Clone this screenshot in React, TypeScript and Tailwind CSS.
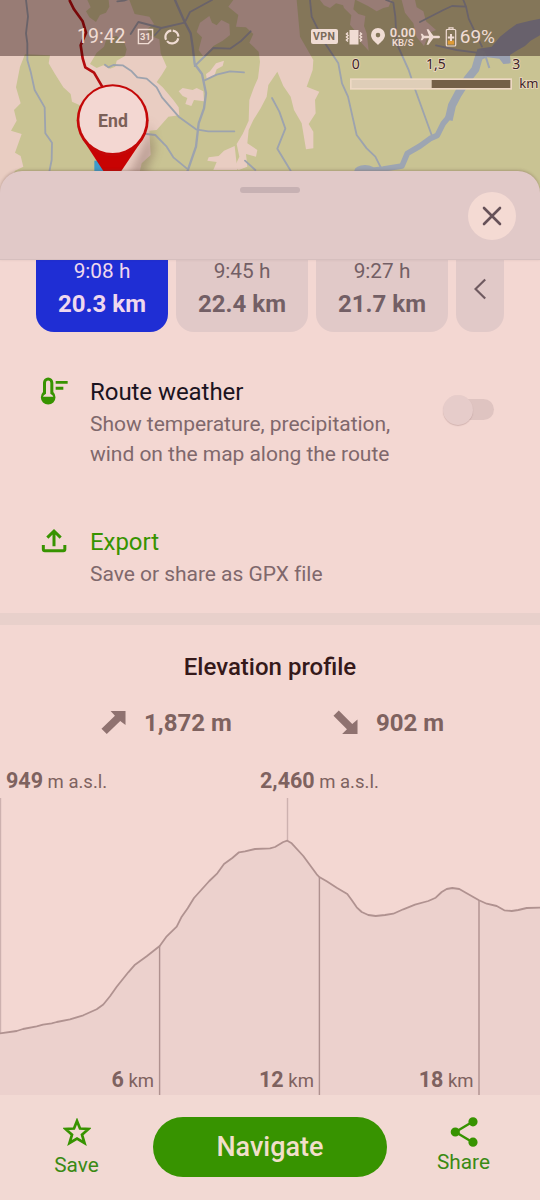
import type { ReactNode } from 'react';

// routes
const routes = [
  { time: '9:08 h', distance: '20.3 km', active: true },
  { time: '9:45 h', distance: '22.4 km', active: false },
  { time: '9:27 h', distance: '21.7 km', active: false },
];

// elevation line, x is in px and y is measured from the top of the chart
const profile: [number, number][] = [
  [0, 235.3], [16.7, 233], [23, 231], [36.7, 228.3], [43, 226.7], [51.7, 225.3], [56.7, 224], [70, 221.3],
  [83.3, 217.3], [96.7, 211.3], [103.3, 206.5], [110, 198.3], [116.7, 188.7], [128.3, 174.3], [135, 166.7],
  [146.7, 158.3], [159.7, 148], [166.7, 138.3], [176.7, 128.7], [181.7, 118.7], [187.7, 110.3], [194, 100],
  [209.3, 83], [217.3, 75.3], [224, 66], [232.3, 60], [239, 54.3], [245, 53.3], [255, 51], [270, 50.3],
  [275, 49], [283.3, 44], [287.3, 42.7], [291.7, 45.3], [303.3, 58], [316.7, 76.3], [319.3, 79], [326.7, 83.3],
  [336.7, 89.7], [347.3, 96], [351.7, 102], [356.7, 109.3], [361.7, 114], [368.3, 117], [375.7, 118],
  [385, 117], [393.3, 115.7], [403.3, 111.3], [415, 106.7], [428.3, 103], [435.7, 99.7], [441.7, 94],
  [446.7, 91], [452.3, 90], [459.3, 91], [466.7, 95.3], [479, 102.3], [486.7, 105.7], [496.7, 108],
  [504.3, 112.3], [511.7, 113], [518.3, 112], [526.7, 110], [540, 109.7],
];

const distances = [
  { value: 6, x: 159.6, y: 148 },
  { value: 12, x: 319.4, y: 79 },
  { value: 18, x: 479, y: 102 },
];

const MapView = () => (
  <svg className="block h-[200px] w-[540px] shrink-0" viewBox="0 0 1620 600">
    <defs>
      <filter id="shade" x="-50%" y="-50%" width="200%" height="200%">
        <feGaussianBlur stdDeviation="14" />
      </filter>
    </defs>
    <rect width="1620" height="600" fill="#e9cdc2" />

    {/* forests */}
    <g fill="#c9c393">
      <path d="M75 163L150 166L146 190L165 222L190 262L212 282L216 305L245 318L300 420L310 540L30 540L45 512L70 500L62 468L45 458L65 402L33 392L50 362L42 330L62 310L48 262L60 200Z" />
      <path d="M262 0L326 0L328 20L318 38L300 45L288 66L268 52L258 34L272 22Z" />
      <path d="M270 192L290 158L312 140L320 115L350 108L372 125L380 148L375 168L350 182L346 200L330 206L310 196L290 204Z" />
      <path d="M388 0L404 42L448 50L462 72L440 88L452 108L478 118L482 160L500 200L485 225L470 246L488 262L520 300L536 322L538 346L505 350L470 390L448 392L450 430L452 465L425 490L400 600L1620 600L1620 0Z" />
    </g>

    {/* clearings */}
    <g fill="#e9cdc2">
      <path d="M628 48L600 68L590 96L606 112L596 150L612 172L640 138L668 122L690 105L688 72L664 60L650 76L636 68Z" />
      <path d="M700 0L685 20L715 45L708 80L738 82L760 102L748 128L776 155L780 185L774 235L762 262L748 300L746 362L728 402L710 432L718 470L704 500L716 510L742 500L738 462L768 470L772 450L742 430L746 390L760 360L782 325L800 290L805 255L832 215L850 258L872 290L882 330L905 370L918 448L940 445L940 395L926 372L947 340L945 300L958 275L920 260L938 210L940 180L900 110L890 0Z" />
      <path d="M672 182L648 190L630 214L618 222L620 236L642 230L650 208L668 198Z" />
      <path d="M548 264L536 274L548 288L562 294L556 312L574 318L582 300L612 304L610 274L590 264L578 270Z" />
      <path d="M704 438L672 452L656 468L626 472L622 482L650 486L640 510L712 510Z" />
      <path d="M960 0L1052 0L1038 18L1008 10L990 24L972 16Z" />
      <path d="M1025 0L1065 0L1060 28L1075 42L1096 48L1092 78L1100 100L1106 152L1084 128L1070 98L1050 74L1054 46L1032 24Z" />
      <path d="M1068 0L1175 0L1166 20L1150 24L1130 34L1104 18Z" />
      <path d="M1205 0L1245 0L1250 22L1270 34L1278 64L1308 90L1288 98L1272 138L1250 112L1240 70L1215 38Z" />
    </g>

    {/* streams */}
    <g fill="none" stroke="#9da3ae" strokeWidth="5.500" strokeLinejoin="round" strokeLinecap="round">
      <path d="M78 0L84 50L78 100L82 130L82 180L92 215L104 270L134 322L136 400L156 428L155 480L148 515" />
      <path d="M315 194L325 202L340 195L368 196L395 214L412 232L440 236L470 262L486 292L536 350L588 388L625 394L703 394" />
      <path d="M440 402L466 405L500 440L520 472L560 505" />
      <path d="M525 0L554 66L572 100L578 140L584 192L606 222L618 280L612 325L596 370L588 440L562 515" strokeWidth="7" />
      <path d="M554 68L570 36L636 0" />
      <path d="M392 102L415 66L484 84L554 68M484 84L465 105" />
      <path d="M584 198L640 144L690 146L722 124L752 94" />
      <path d="M612 242L650 224L690 214L732 217" />
      <path d="M352 4L372 2L398 -8" />
      <path d="M735 482L766 510" />
      <path d="M816 294L838 335L856 386L832 446L872 512" />
      <path d="M930 0L935 50L975 130L1015 190L1026 250L1044 290L1070 405L1100 445L1126 470L1144 506" />
      <path d="M1158 0L1180 8L1186 50L1190 130L1226 210L1246 270L1296 408" />
      <path d="M1430 158L1370 150L1308 136" />
      <path d="M1260 66L1330 30L1356 18L1398 20M1390 0L1398 20L1406 56L1446 140" />
    </g>

    {/* river */}
    <path d="M1620 56L1590 62L1550 72L1525 90L1500 110L1475 140L1435 146L1428 185L1462 172L1498 176L1510 192L1532 190L1530 165L1550 152L1575 138L1592 122L1620 106Z" fill="#9aa1b2" />
    <g fill="none" stroke="#9da5b2" strokeLinejoin="round">
      <path d="M1444 150L1434 180L1426 208L1402 238L1374 282L1356 316L1346 360" strokeWidth="24" />
      <path d="M1347 350L1330 370L1312 406L1290 416L1260 438L1222 460L1206 498L1150 507L1090 514" strokeWidth="17" />
      <path d="M1454 160L1468 204" strokeWidth="6" />
    </g>
    <ellipse cx="1095" cy="512" rx="32" ry="17" fill="#9da5b2" />

    {/* scale */}
    <rect x="1050" y="235" width="486" height="34" fill="#eed8c4" />
    <rect x="1055" y="240" width="240" height="24" fill="#dfceb8" />
    <rect x="1295" y="240" width="236" height="24" fill="#746047" />
    <g fill="#3d2328" stroke="#ecd8c2" strokeWidth="5" paintOrder="stroke" fontFamily="Noto Sans, sans-serif" fontSize="42">
      <text x="1067" y="206" textAnchor="middle">0</text>
      <text x="1308" y="206" textAnchor="middle">1,5</text>
      <text x="1549" y="206" textAnchor="middle">3</text>
      <text x="1558" y="264" fontSize="39">km</text>
    </g>

    {/* track and end marker */}
    <path d="M208 0L222 28L248 64L258 98L242 136L248 175L256 202L282 218L308 262" fill="none" stroke="#b40c0e" strokeWidth="8" strokeLinejoin="round" />
    <path d="M445 340C462 400 420 450 380 540L430 540L465 450Z" fill="#6b4b45" opacity="0.35" filter="url(#shade)" />
    <path d="M283 482h28v40h-28z" fill="#3f9ccb" />
    <path d="M248 418L312 516Q338 548 362 516L428 418Z" fill="#c80303" />
    <circle cx="338" cy="361" r="108" fill="#c40808" />
    <circle cx="338" cy="359" r="100" fill="#f3d7d2" />
    <text x="339" y="380" textAnchor="middle" fontFamily="Roboto, sans-serif" fontWeight="700" fontSize="53" fill="#7b6058">
      End
    </text>
  </svg>
);

const StatusBar = () => (
  <div className="absolute inset-x-0 top-0 flex h-14 items-center bg-[#1f0202]/40 pt-[17px] pr-[45px] pl-[77px] text-[#f0dcd3]">
    <span className="text-[19.5px] leading-none">19:42</span>
    <svg className="ml-[11px] size-[17px]" viewBox="0 0 18 18" fill="none" stroke="currentColor" strokeWidth="1.500">
      <path d="M1.500 1.500h15v10.500l-4.500 4.500h-10.500z" />
      <text x="8.800" y="12.400" textAnchor="middle" fontSize="10" fontWeight="700" fill="currentColor" stroke="none">
        31
      </text>
    </svg>
    <svg className="ml-[10px] size-4" viewBox="0 0 16 16" fill="none" stroke="currentColor" strokeWidth="2.200">
      <path d="M8.800 1.600A6.400 6.400 0 0 1 14.400 7.600M14.200 9.200A6.400 6.400 0 0 1 3 12.100M2.100 10.800A6.400 6.400 0 0 1 7.300 1.600" />
    </svg>
    <div className="ml-auto flex items-center">
      <span className="flex h-[15px] w-[27px] items-center justify-center rounded-[2px] bg-[#f0dcd3] text-[10.5px] font-bold tracking-[0.4px] text-[#796a59]">VPN</span>
      <svg className="ml-[7px] h-4 w-[18px]" viewBox="0 0 18 16" fill="none" stroke="currentColor" strokeWidth="1.500">
        <rect x="4.500" y="1" width="9" height="14.500" fill="currentColor" stroke="none" />
        <path d="M3 3.500L1.500 5L3 6.500L1.500 8L3 9.500L1.500 11L3 12.500M15 3.500L16.500 5L15 6.500L16.500 8L15 9.500L16.500 11L15 12.500" />
      </svg>
      <svg className="ml-2 h-[17px] w-[14px]" viewBox="0 0 14 17" fill="currentColor" fillRule="evenodd">
        <path d="M7 0a7 7 0 0 1 7 7c0 4-4 7-7 10C4 14 0 11 0 7a7 7 0 0 1 7-7zM7 4.800a2.300 2.300 0 1 0 0 4.600a2.300 2.300 0 1 0 0-4.600z" />
      </svg>
      <div className="ml-1 flex w-[28px] flex-col items-center font-semibold">
        <span className="text-[13px] leading-[11px]">0.00</span>
        <span className="text-[9.5px] leading-[9px]">KB/S</span>
      </div>
      <svg className="ml-[3px] h-4 w-5" viewBox="0 0 20 16" fill="currentColor">
        <path d="M20 8c0-.9-.8-1.300-1.700-1.300h-5L8.500.3H6.600l2.500 6.400H4L2.400 4.700H.7L1.900 8L.7 11.300h1.700L4 9.300h5.100l-2.500 6.400h1.900l4.800-6.400h5c.9 0 1.700-.4 1.700-1.300z" />
      </svg>
      <svg className="ml-[5px] h-5 w-3" viewBox="0 0 12 20" fill="none" stroke="currentColor" strokeWidth="1.200">
        <path d="M4 2V.8h4V2" />
        <rect x="1.300" y="2.500" width="9.400" height="16.500" rx="1" />
        <path d="M2.800 13.500h6.400v4H2.800z" fill="#dd9a36" stroke="none" />
        <path d="M6 7v7M2.800 10.500h6.400" strokeWidth="2" />
      </svg>
      <span className="ml-[3px] text-[19px] leading-none">69%</span>
    </div>
  </div>
);

type RowProps = { icon: ReactNode; title: string; titleClass: string; children: ReactNode; action?: ReactNode };

const OptionRow = ({ icon, title, titleClass, children, action }: RowProps) => (
  <div className="flex pr-[46px] pl-10">
    <div className="w-[50px] shrink-0">{icon}</div>
    <div className="flex-1">
      <h3 className={`text-[24px] leading-8 tracking-[-0.05px] ${titleClass}`}>{title}</h3>
      <p className="mt-px text-[21px] leading-[30px] tracking-[-0.03px] whitespace-nowrap text-[#7f686c]">{children}</p>
    </div>
    {action}
  </div>
);

const ElevationChart = () => {
  const line = profile.map(([x, y]) => `${x},${y}`).join(' ');

  return (
    <svg className="block h-[297px] w-[540px]" viewBox="0 0 540 297">
      <polygon points={`0,297 ${line} 540,297`} fill="#ecd1cd" />
      <path d="M0.500 0V235M287.500 0V43" stroke="#cdb1af" strokeWidth="1.400" />
      {distances.map((item) => (
        <g key={item.value} fill="#7e625f">
          <path d={`M${item.x} ${item.y}V297`} stroke="#af918f" strokeWidth="1.400" />
          <text x={item.x - 5.500} y="288.700" textAnchor="end" fontSize="18.500">
            <tspan fontWeight="700" fontSize="21.500">{item.value}</tspan> km
          </text>
        </g>
      ))}
      <polyline points={line} fill="none" stroke="#b09290" strokeWidth="1.800" strokeLinejoin="round" />
    </svg>
  );
};

export default function App() {
  return (
    <div className="relative flex h-[1200px] w-[540px] flex-col overflow-hidden bg-[#f3d7d2] font-[Roboto,sans-serif]">
      <MapView />
      <StatusBar />

      {/* sheet header, overlaps the lower edge of the map */}
      <header className="relative z-10 -mt-[29px] flex h-[89px] shrink-0 justify-center rounded-t-[22px] border-b border-[#d6bfbe] bg-[#e1c9c8] shadow-[0_-1px_3px_rgba(90,60,50,0.3)]">
        <div className="mt-4 h-1.5 w-[60px] rounded-full bg-[#c7b1b3]" />
        <button className="absolute top-[21px] right-6 flex size-12 items-center justify-center rounded-full bg-[#f4dad3]">
          <svg className="size-5" viewBox="0 0 20 20" stroke="#665158" strokeWidth="2.600" strokeLinecap="round">
            <path d="M2 2L18 18M18 2L2 18" />
          </svg>
        </button>
      </header>

      {/* route cards */}
      <div className="flex gap-2 px-9">
        {routes.map((route) => (
          <div
            key={route.time}
            className={`flex h-[71.5px] w-[132px] flex-col items-center rounded-b-[18px] ${route.active ? 'bg-[#1f2ed4] text-[#efd8ee]' : 'bg-[#e1c9c8] text-[#735f65]'}`}
          >
            <span className="text-[20.8px] leading-[23px]">{route.time}</span>
            <span className="mt-[5px] text-[24px] leading-8 font-bold">{route.distance}</span>
          </div>
        ))}
        <button className="flex h-[71.5px] flex-1 justify-center rounded-b-[18px] bg-[#e1c9c8] pt-[18px]">
          <svg className="h-[22px] w-3" viewBox="0 0 12 22" fill="none" stroke="#6f5a60" strokeWidth="2.200">
            <path d="M11.200 1.500L1.500 11L11.200 20.500" />
          </svg>
        </button>
      </div>

      {/* options */}
      <div className="mt-11 flex flex-col gap-[57px]">
        <OptionRow
          title="Route weather"
          titleClass="text-[#1b1320]"
          icon={
            <svg className="mt-px h-[29px] w-7" viewBox="60 51 84 87" fill="#379300">
              <path fillRule="evenodd" d="M69 68a15.500 15.500 0 0 1 31 0v28a22 22 0 1 1-31 0zM78 68v33q-8 4-9 9h31q-1-5-9-9v-33a6.500 6.500 0 0 0-13 0z" />
              <path d="M107 63h36v8h-36zM107 80h23v9h-23z" />
            </svg>
          }
          action={
            <div className="mt-[18px] flex h-8 w-[51px] items-center">
              <div className="z-10 size-[30px] rounded-full bg-[#e6ccca] shadow-[0_1px_1px_rgba(120,80,80,0.25)]" />
              <div className="-ml-4 h-[21px] w-[37px] rounded-full bg-[#dfc4c1]" />
            </div>
          }
        >
          Show temperature, precipitation,
          <br />
          wind on the map along the route
        </OptionRow>
        <OptionRow
          title="Export"
          titleClass="text-[#379300]"
          icon={
            <svg className="mt-[2px] h-[25px] w-7" viewBox="60 507 84 75" fill="none" stroke="#379300" strokeWidth="9">
              <path d="M70 558V571q0 4.500 4.500 4.500H130q4.500 0 4.500-4.500V558" />
              <path d="M102 562V517M82 536L102 516L122 536" />
            </svg>
          }
        >
          Save or share as GPX file
        </OptionRow>
      </div>

      <div className="mt-6 h-3 shrink-0 bg-[#e8d0cb]" />

      {/* elevation */}
      <section className="relative flex flex-col text-[#7e625f]">
        <h2 className="mt-[26px] text-center text-[24px] leading-8 font-medium text-[#35191a]">Elevation profile</h2>
        <div className="mt-6 flex h-8 items-center pl-[101px] text-[24px] font-bold">
          <svg className="size-[25px]" viewBox="0 0 26 26" fill="#8f7270">
            <path d="M10 1H25.500V15.500L20 11.500L6 25L0.500 19.500L14.500 6Z" />
          </svg>
          <span className="ml-[18px] w-[189px]">1,872 m</span>
          <svg className="size-[25px]" viewBox="0 0 26 26" fill="#8f7270">
            <path d="M6 0.500L20 14.500L25.500 10V25H9.500L14.500 20L0.500 6Z" />
          </svg>
          <span className="ml-[18px]">902 m</span>
        </div>
        <div className="mt-[26px] flex h-[33px] text-[18.5px] leading-8">
          <span className="w-[254px] pl-1.5">
            <b className="text-[21.5px]">949</b> m a.s.l.
          </span>
          <span className="pl-1.5">
            <b className="text-[21.5px]">2,460</b> m a.s.l.
          </span>
        </div>
        <ElevationChart />
      </section>

      {/* footer */}
      <footer className="relative flex flex-1 bg-[#f2d9d3] text-[20.8px] leading-6 text-[#3b8a13]">
        <button className="flex w-[153px] flex-col items-center pt-[23px]">
          <svg className="h-[28px] w-[28px]" viewBox="0 0 28 28" fill="none" stroke="#379300" strokeWidth="2.700">
            <path d="M14 3L17 10.500L25.500 11L19 16.700L21.500 25L14 20.500L6.500 25L9 16.700L2.500 11L11 10.500Z" />
          </svg>
          <span className="mt-[7px]">Save</span>
        </button>
        <button className="mt-[22px] h-[60px] w-[234px] rounded-full bg-[#379300] text-[27px] font-medium text-[#f1dfc9]">Navigate</button>
        <button className="flex w-[153px] flex-col items-center pt-[22px]">
          <svg className="h-[30px] w-7" viewBox="0 0 28 30" fill="#379300" stroke="#379300" strokeWidth="2.400">
            <path d="M23 4.500L5.500 15L23 25.500" fill="none" />
            <circle cx="23" cy="4.800" r="3.400" />
            <circle cx="5.300" cy="15" r="3.400" />
            <circle cx="23" cy="25.200" r="3.400" />
          </svg>
          <span className="mt-[3px]">Share</span>
        </button>
      </footer>
    </div>
  );
}
